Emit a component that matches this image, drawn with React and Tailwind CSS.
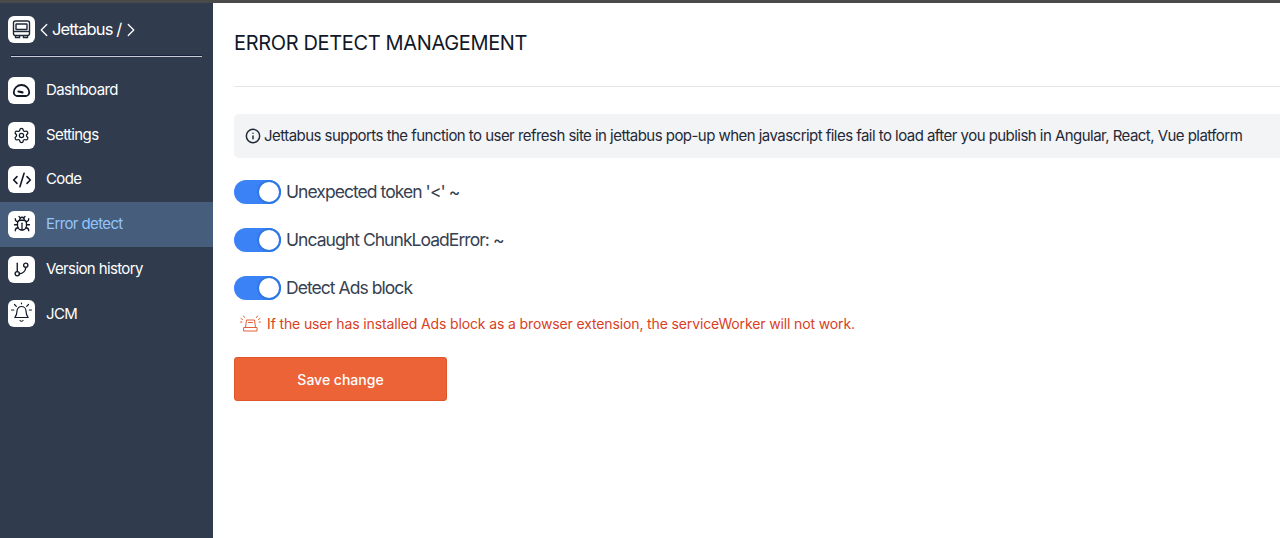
import { ChevronLeft, ChevronRight, Settings, CodeXml, Bug, GitBranch, Info } from "lucide-react";

function BusIcon() {
  return (
    <svg width="21" height="21" viewBox="0 0 21 21" fill="none" stroke="currentColor" strokeWidth="1.4">
      <rect x="2.5" y="2" width="16" height="14.5" rx="2" />
      <rect x="5" y="5" width="11" height="5.5" rx="0.5" />
      <path d="M2.5 12.5h16" />
      <path d="M4.5 16.5v2h4v-2M12.5 16.5v2h4v-2" />
    </svg>
  );
}

function DomeIcon() {
  return (
    <svg width="19" height="19" viewBox="0 0 19 19" fill="none" stroke="currentColor" strokeWidth="1.8" strokeLinecap="round">
      <path d="M5 15h9a3.5 3.5 0 0 0 3.2-3.8C17 7.2 13.8 4 9.5 4S2 7.2 1.8 11.2A3.5 3.5 0 0 0 5 15z" />
      <path d="M6.5 10.5l4 0.8" strokeWidth="2.2" />
    </svg>
  );
}

function BellRays() {
  return (
    <svg width="23" height="23" viewBox="0 0 23 23" fill="none" stroke="currentColor" strokeWidth="1.2" strokeLinecap="round" strokeLinejoin="round">
      <path d="M11.5 4.5a4.5 4.5 0 0 0-4.5 4.5c0 3.5-1 5-2.2 6.5h13.4C17 14 16 12.500 16 9a4.500 4.500 0 0 0-4.500-4.500z" />
      <path d="M10 18.500c.8 1 2.200 1 3 0" />
      <path d="M4.500 2.500l1.800 1.800M18.500 2.500l-1.800 1.800M1.500 8h2.200M19.300 8h2.200M11.500 1v.8" />
    </svg>
  );
}

function SirenRays() {
  return (
    <svg width="21" height="18" viewBox="0 0 21 18" fill="none" stroke="currentColor" strokeWidth="1" strokeLinecap="round" strokeLinejoin="round">
      <path d="M5.500 12.500L6.500 5h8l1 7.500" />
      <path d="M4 12.500h13v3.500H4z" />
      <path d="M8.500 7.500h4" />
      <path d="M1 3.500l1.500 1M20 3.500l-1.500 1M3.500 1l1 1.500M17.500 1l-1 1.500M.5 7h1.500M19 7h1.500" />
    </svg>
  );
}

const NAV = [
  { label: "Dashboard", icon: DomeIcon },
  { label: "Settings", icon: () => <Settings size={17} strokeWidth={1.8} /> },
  { label: "Code", icon: () => <CodeXml size={20} strokeWidth={1.9} /> },
  { label: "Error detect", icon: () => <Bug size={18} strokeWidth={1.7} />, active: true },
  { label: "Version history", icon: () => <GitBranch size={17} strokeWidth={1.9} /> },
  { label: "JCM", icon: BellRays },
];

const TOGGLES = ["Unexpected token '<' ~", "Uncaught ChunkLoadError: ~", "Detect Ads block"];

function Toggle() {
  return (
    <span className="w-[47px] h-[24px] rounded-full bg-[#3b82f6] flex justify-end shrink-0">
      <span className="w-[24px] h-[24px] rounded-full bg-white border-2 border-[#2f78e4]" />
    </span>
  );
}

export default function App() {
  return (
    <div className="h-[538px] flex flex-col bg-white overflow-hidden font-['Inter',sans-serif]">
      <div className="h-[3px] bg-[#4a4a4a] shrink-0" />
      <div className="flex flex-1 min-h-0">
        {/* Sidebar */}
        <aside className="w-[213px] shrink-0 bg-[#303c4e] text-white">
          <div className="flex items-center pl-[8px] pt-[13px]">
            <span className="w-[27px] h-[27px] rounded-[6px] bg-white flex items-center justify-center text-[#1f2937]">
              <BusIcon />
            </span>
            <span className="flex items-center text-[16.5px] tracking-[-0.85px] ml-[1px]">
              <ChevronLeft size={22} strokeWidth={1.4} className="mx-[-3px]" />
              <span>Jettabus /</span>
              <ChevronRight size={22} strokeWidth={1.4} className="ml-[-1px]" />
            </span>
          </div>
          <div className="mx-[11px] mt-[12px] h-[2px] bg-[#c9ced6] border-t border-[#16233c]" />
          <nav className="mt-[11px]">
            {NAV.map(({ label, icon: Icon, active }) => (
              <div
                key={label}
                className={`h-[44.7px] flex items-center pl-[8px] ${active ? "bg-[#465d7b] text-[#93c5fd]" : ""}`}
              >
                <span className="w-[27px] h-[27px] rounded-[6px] bg-white flex items-center justify-center text-[#111827]">
                  <Icon />
                </span>
                <span className="ml-[11px] text-[15px] tracking-[-0.62px]">{label}</span>
              </div>
            ))}
          </nav>
        </aside>

        {/* Main */}
        <main className="flex-1 min-w-0 pl-[21px]">
          <h1 className="pt-[27px] text-[20px] leading-[26px] text-[#111827] tracking-[-0.35px]">ERROR DETECT MANAGEMENT</h1>
          <div className="mt-[30px] h-px bg-[#e5e7eb]" />
          <div className="mt-[27px] h-[44px] rounded-l-[5px] bg-[#f3f4f6] flex items-center pl-[11px] text-[15px] text-[#1f2937] whitespace-nowrap tracking-[-0.54px]">
            <Info size={16} strokeWidth={2.2} className="mr-[3px] shrink-0" />
            Jettabus supports the function to user refresh site in jettabus pop-up when javascript files fail to load after you publish in Angular, React, Vue platform
          </div>
          <div className="mt-[10px]">
            {TOGGLES.map((t) => (
              <div key={t} className="h-[48px] flex items-center gap-[5px] text-[#374151] text-[17.5px] tracking-[-0.95px]">
                <Toggle />
                {t}
              </div>
            ))}
          </div>
          <div className="mt-[1px] flex items-center text-[14px] text-[#d9401f] tracking-[-0.13px]">
            <span className="ml-[6px] mr-[6px] text-[#e0613a]">
              <SirenRays />
            </span>
            If the user has installed Ads block as a browser extension, the serviceWorker will not work.
          </div>
          <button className="mt-[23px] w-[213px] h-[44px] rounded-[3px] bg-[#ec6337] border border-[#e0552a] text-white text-[14px] font-medium">
            Save change
          </button>
        </main>
      </div>
    </div>
  );
}
